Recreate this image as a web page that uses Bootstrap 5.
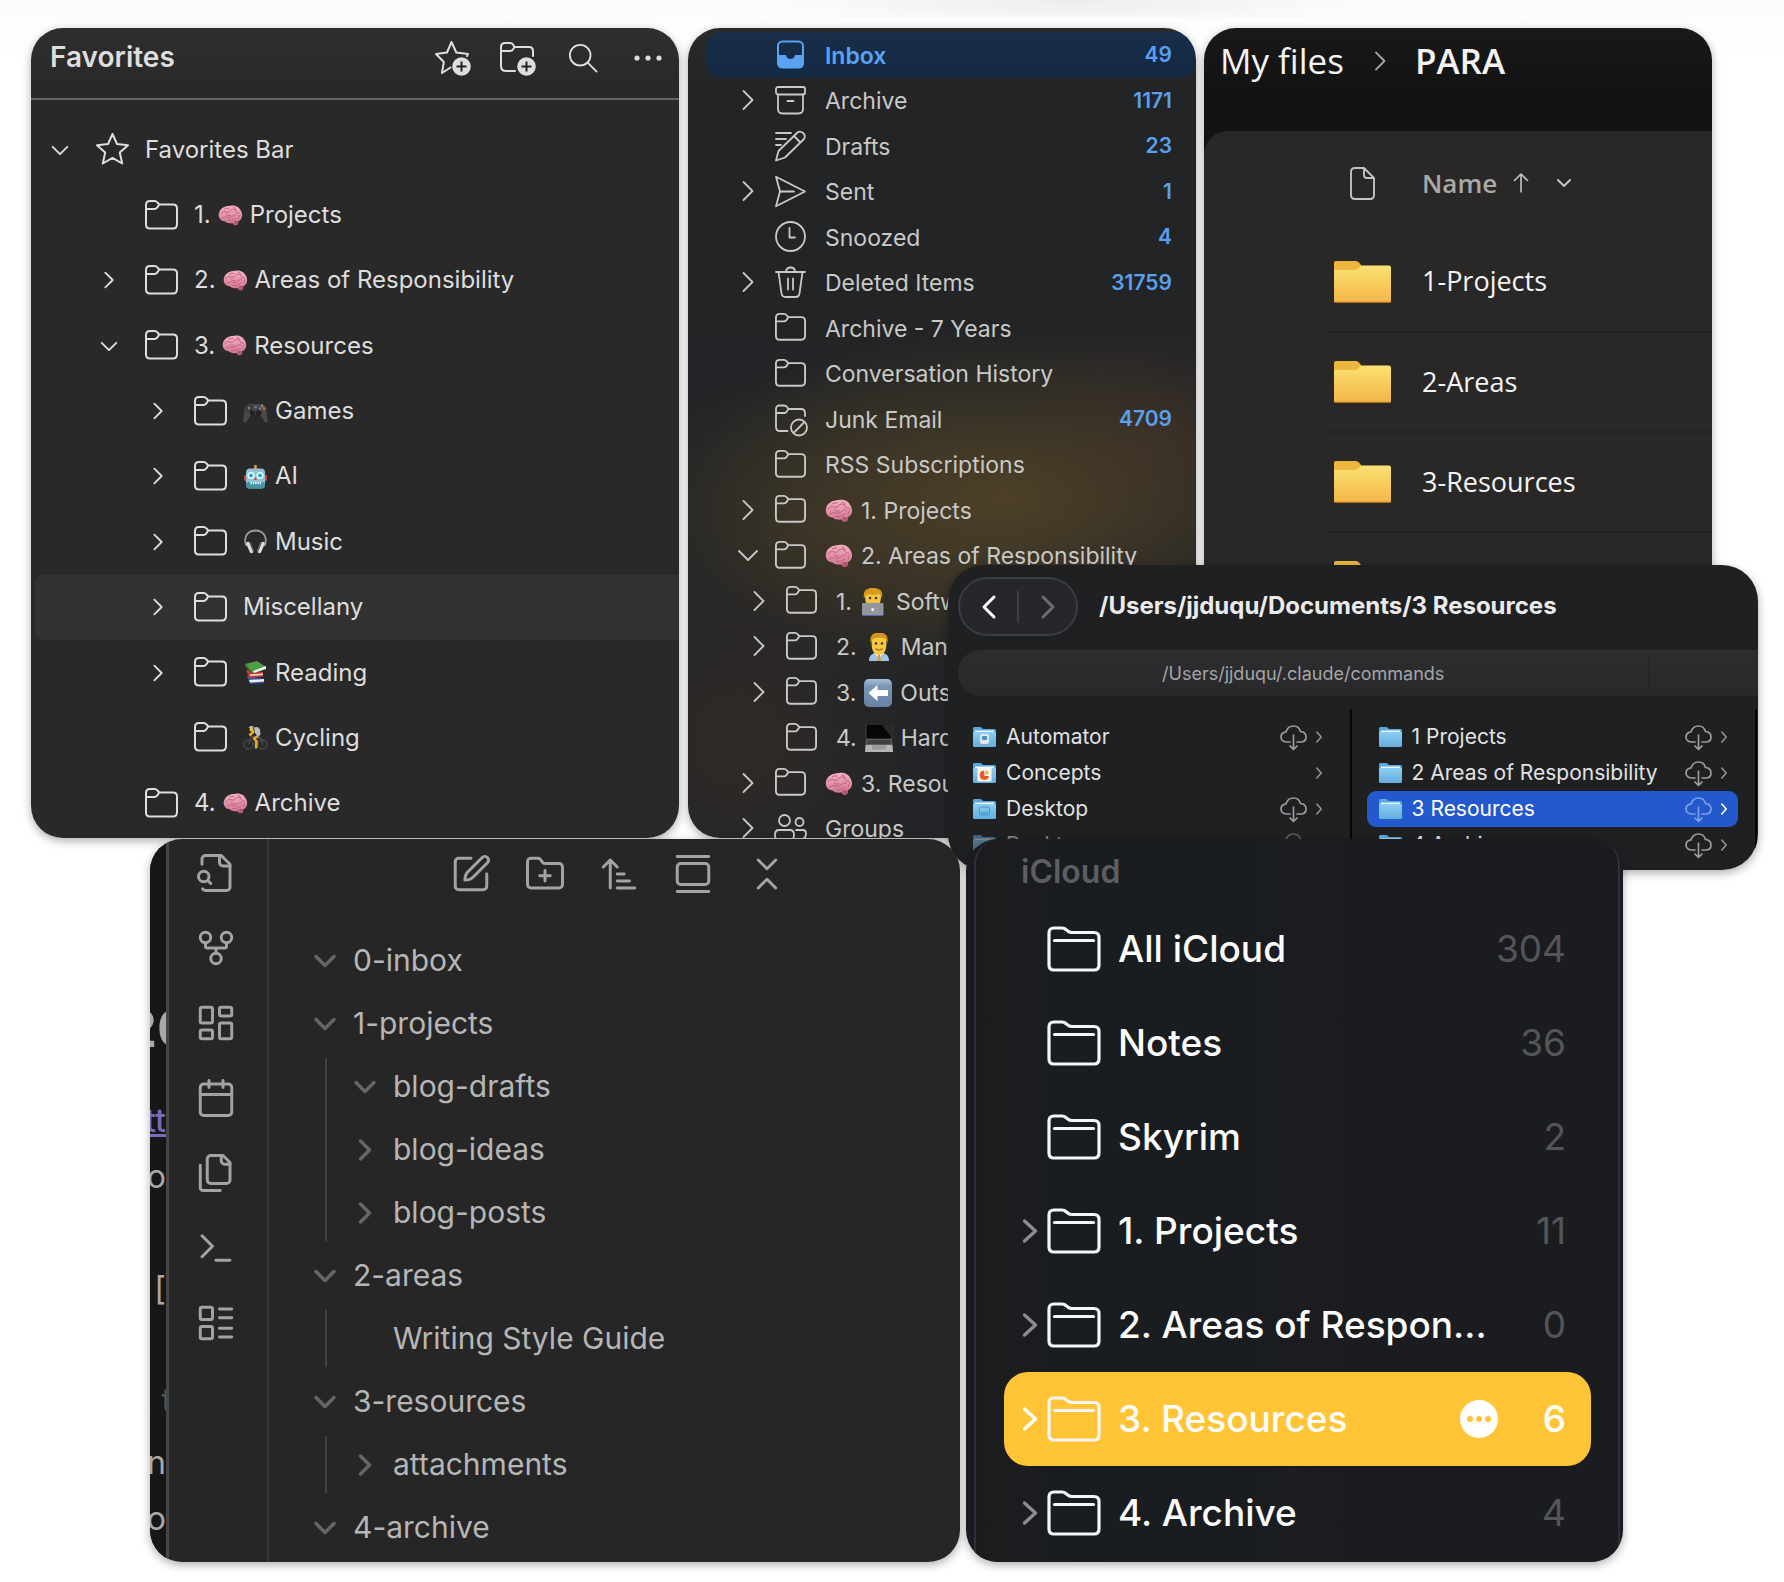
<!DOCTYPE html>
<html lang="en">
<head>
<meta charset="utf-8">
<meta name="viewport" content="width=device-width, initial-scale=1">
<title>PARA everywhere</title>
<link href="https://cdn.jsdelivr.net/npm/bootstrap@5.3.0/dist/css/bootstrap.min.css" rel="stylesheet">
<style>
body{font-family:Inter,"Liberation Sans",sans-serif;background:#fff;overflow-x:hidden}
a,a:hover{color:inherit;text-decoration:none}
ul{list-style:none;margin:0;padding:0}
svg{display:block;flex:none;overflow:visible}
.ln{fill:none;stroke:currentColor;stroke-linecap:round;stroke-linejoin:round}
.bare{background:none;border:0;padding:0;color:inherit;display:flex;align-items:center;justify-content:center;flex:none}
.desk{padding:28px 0 20px;background:
  radial-gradient(280px 30px at 60% 0,#ededed,#ededed00) 0 0/100% 17px no-repeat,
  linear-gradient(#fafafa,#fcfcfc) 0 0/100% 17px no-repeat,
  linear-gradient(#fdfdfd,#fff) 0 17px/100% 40px no-repeat #fff}
.win{border-radius:32px;overflow:hidden;box-shadow:0 3px 10px rgba(0,0,0,.32);min-width:0}
.top-row{padding:0 72px 0 31px;height:810px}
.low-row{padding:0 161px 0 150px;margin-top:1px;height:723px;z-index:2}

/* favourites */
.fav{flex:648 1 0;margin-right:9px;background:linear-gradient(#2e2e2e,#292929 60px);color:#dedede;font-size:24px}
.fav-head{height:72px;border-bottom:2px solid #666;padding:0 13px 10px 19px;gap:29px}
.fav-head h2{font-size:28px;font-weight:600;margin:0 auto 0 0}
.fav-head .bare{width:36px;height:36px}
.fav-list{padding:17px 0 2px}
.fav-row{flex:1 1 0;display:flex;align-items:center;margin-left:4px;padding-left:13px;border-radius:8px 0 0 8px}
.fav-row.lv1{padding-left:62px}
.fav-row.lv2{padding-left:111px}
.fav-row.hov{background:#323232}
.fav-row .tw{width:24px;height:24px;margin-right:24px;flex:none}
.fav-row .ic{width:33px;height:33px;margin-right:16px}
.fav-row a{display:flex;align-items:center;gap:7px}
.fav .em{width:25px;height:25px}

/* mail: the side padding (19px) is added to the flex share */
.mail{flex:489 1 0;margin-right:8px;padding:4px 1px 0 18px;color:#c9c9c8;font-size:23px;background:
  radial-gradient(330px 170px at 62% 58%,#4d4026,#4d402600),
  radial-gradient(140px 130px at 92% 50%,#3c2b2988,#3c2b2900),
  radial-gradient(190px 200px at 10% 88%,#2f2a27,#2f2a2700),
  radial-gradient(260px 160px at 28% 62%,#40372688,#40372600),
  linear-gradient(#2a2b2b,#222426 60px,#222427)}
.mail ul{height:819px;display:flex;flex-direction:column}
.mail li{flex:1 1 0;display:flex;align-items:center;padding:0 23px 0 30px;border-radius:16px}
.mail li.sub{padding-left:41px}
.mail li.cur{background:linear-gradient(#182e49,#132943);color:#5aa2f2;font-weight:600}
.mail .tw{width:24px;height:24px;margin-right:15px;flex:none}
.mail .ic{width:31px;height:31px;margin-right:19px}
.mail a{display:flex;align-items:center;gap:8px;white-space:nowrap;margin-right:auto;padding-top:2px}
.mail .em{width:28px;height:28px}
.mail .cnt{color:#5a9ff0;font-weight:600;font-size:21px}

/* drive */
.drive{flex:508 1 0;background:linear-gradient(#191919,#131313 60px);color:#f4f4f4;font-family:"Open Sans","Noto Sans",sans-serif}
.crumb{height:103px;padding:0 0 38px 16px;font-size:35px;line-height:46px}
.crumb .sep{width:20px;height:20px;margin:0 25px 0 26px}
.drive-body{background:#292827;border-top-left-radius:24px;height:707px;padding-left:122px}
.drive table{width:100%;border-collapse:collapse;font-size:27px}
.drive th{height:101px;padding-top:4px;color:#aaa9a7;font-weight:600;font-size:26px}
.drive td{height:100px;border-bottom:2px solid #242322}
.drive .c1{width:73px}
.drive .c1 svg{margin:0 auto}
.drive .c2{padding-left:23px}
.drive .caret{margin-left:28px}

/* finder */
.finder{position:absolute;top:565px;right:26px;width:45.4%;height:305px;background:#1e2022;color:#e2e2e3;z-index:1;border-radius:36px}
.fd-bar{padding:12px 0 0 10px;height:85px}
.pill{width:120px;height:59px;border-radius:30px;border:2px solid #3a3d42;background:#25272b}
.pill .bare{width:57px;height:55px}
.pill i{width:2px;height:32px;background:#3b3d41}
.fd-bar h2{height:59px;font-size:24px;font-weight:700;margin:0 0 0 21px;color:#ebebeb;white-space:nowrap}
.fd-tab{margin-left:10px;height:46px;border-radius:23px 0 0 23px;background:linear-gradient(#2c2d2f,#29292c);color:#a4a5a7;font-size:18px}
.fd-tab a{flex:692 1 0;text-align:center}
.fd-tab span{flex:108 1 0;border-left:2px solid #242527;height:30px}
.fd-cols{margin-top:13px;height:161px}
.fd-col{flex:1 1 0;padding:10px 17px 0 15px;border-right:2px solid #060607;min-width:0}
.fd-col:first-child{padding-left:13px}
.fd-col:last-child{margin-right:1px}
.fd-col li{height:36px;border-radius:9px;display:flex;align-items:center;padding:0 11px 0 12px;font-size:21px;white-space:nowrap}
.fd-col li.cur{background:#2458cd;color:#fff}
.fd-col .fo{width:23px;height:22px;margin-right:10px}
.fd-col a{margin-right:auto}
.fd-col .cl{width:27px;height:27px;color:#9b9c9e}
.fd-col .ar{width:6px;height:12px;margin-left:9px;color:#929395}
.fd-col .cur .cl{color:#7f9fe6}
.fd-col .cur .ar{color:#fff}
.fd-col .dim{opacity:.5}

/* vault */
.vault{flex:810 1 0;margin-right:6px;background:#262626;color:#b6b6b6}
.sliver{width:16px;background:#171717;overflow:hidden;color:#a9a9a9;font-size:32px;line-height:38px;padding-top:162px}
.sliver div{display:flex;justify-content:flex-end;white-space:nowrap}
.sliver .big{font-size:52px;font-weight:700;line-height:56px;height:101px;margin-right:-26px}
.sliver .lk{color:#7c6bbd;text-decoration:underline;font-weight:500;height:56px}
.sliver .s1{height:112px}.sliver .s2{height:112px}.sliver .s3{height:62px;color:#555;margin-right:-6px}.sliver .s4{height:56px}
.ribbon{width:103px;border-left:3px solid #454545;border-right:2px solid #383838;padding:13px 4px 0 0;gap:33px}
.vault .bare{color:#a3a3a3}
.vault-tools{padding:14px 0 34px 9px;gap:32px}
.tree{font-size:30px}
.tree .nd{height:63px;display:flex;align-items:center;padding-left:44px}
.tree ul .nd{padding-left:84px}
.tree .tw{width:24px;height:24px;margin-right:16px;flex:none;color:#666}
.tree ul{position:relative}
.tree ul::before{content:"";position:absolute;left:56px;top:3px;bottom:3px;width:2px;background:#414141}

/* notes */
.notes{flex:657 1 0;background:#191b1e;color:#fcfcfc}
.notes-in{margin:0 3px 0 8px;border:solid #2d3039;border-width:0 2px;border-radius:26px 26px 0 0;height:100%;background:linear-gradient(90deg,#1b1c1e,#191d20 25%,#1b1c20 60%,#1b1c1f)}
.notes h3{height:63px;margin:0;padding:3px 0 0 45px;display:flex;align-items:center;font-size:32px;font-weight:600;color:#5d5e61}
.notes li{height:94px;margin:0 27px 0 28px;padding:0 25px 0 18px;border-radius:24px;display:flex;align-items:center;font-size:37px;font-weight:500;white-space:nowrap}
.notes .tw{width:16px;height:26px;margin-right:9px;flex:none;color:#8c8d90}
.notes .ic{width:54px;height:46px;margin-right:17px;color:#f4f6f8}
.notes a{margin-right:auto}
.notes .cnt{color:#545558;font-weight:400}
.notes .cur{background:#ffc537}
.notes .cur .tw,.notes .cur .cnt{color:#fff}
.notes .cur .cnt{font-weight:500}
.notes .more{width:38px;height:38px;margin-right:45px}
</style>
<script src="https://cdn.jsdelivr.net/npm/bootstrap@5.3.0/dist/js/bootstrap.bundle.min.js"></script>
</head>
<body>
<svg width="0" height="0" class="position-absolute" aria-hidden="true">
<defs>
<linearGradient id="gBrain" x1="0" y1="0" x2="0" y2="1"><stop offset="0" stop-color="#f7b3c3"/><stop offset="1" stop-color="#cf6f8c"/></linearGradient>
<linearGradient id="gYel" x1="0" y1="0" x2="0" y2="1"><stop offset="0" stop-color="#fbe172"/><stop offset="1" stop-color="#f2b646"/></linearGradient>
<linearGradient id="gBlue" x1="0" y1="0" x2="0" y2="1"><stop offset="0" stop-color="#8ccdf3"/><stop offset="1" stop-color="#62aede"/></linearGradient>
<linearGradient id="gKey" x1="0" y1="0" x2="0" y2="1"><stop offset="0" stop-color="#a9bfd8"/><stop offset=".25" stop-color="#7a96b6"/><stop offset="1" stop-color="#6683a5"/></linearGradient>
</defs>
<symbol id="c-d" viewBox="0 0 24 24"><path class="ln" stroke-width="2" d="M4 8.500l8 8 8-8"/></symbol>
<symbol id="c-r" viewBox="0 0 24 24"><path class="ln" stroke-width="2" d="M8 4l8 8-8 8"/></symbol>
<symbol id="m-d" viewBox="0 0 24 24"><path class="ln" stroke-width="1.800" d="M3 8l9 9 9-9"/></symbol>
<symbol id="m-r" viewBox="0 0 24 24"><path class="ln" stroke-width="1.800" d="M7.500 3l9 9-9 9"/></symbol>
<symbol id="o-d" viewBox="0 0 24 24"><path class="ln" stroke-width="3.500" d="M3 7.500l9 9 9-9"/></symbol>
<symbol id="o-r" viewBox="0 0 24 24"><path class="ln" stroke-width="3.500" d="M7.500 3l9 9-9 9"/></symbol>
<symbol id="n-r" viewBox="0 0 16 26"><path class="ln" stroke-width="3.400" d="M2.500 3l11 10-11 10"/></symbol>
<symbol id="fold" viewBox="0 0 33 33"><path class="ln" stroke-width="2" d="M1 6q0-4 4-4h4.500q1.800 0 3 1.500l1.700 2H28q4 0 4 4V25q0 4.500-4 4.500H5q-4 0-4-4zM1 10h8.500q1.600 0 2.600-1.300l2.200-3.200"/></symbol>
<symbol id="star" viewBox="0 0 33 33"><path class="ln" stroke-width="2" d="M16.500 1l4.500 10 11 1.200-8.200 7.300 2.400 11-9.700-5.600-9.700 5.600 2.400-11L1 12.200 12 11z"/></symbol>
<symbol id="brain" viewBox="0 0 28 28"><path fill="url(#gBrain)" d="M14 3c6-1 10 2 11.500 5.500C28.500 13 27 19 22.500 20.500c.8 2-.3 4.500-2.700 4.500-1.600 0-2.600-1.200-3.200-2.400C13 23 9.500 22.500 7.500 20.500 2.500 20 0 16 1 11.500 2 6.500 7 3 14 3z"/><path fill="#b25574" d="M17 20.500q3-1 5.500 0 .5 4-2.700 4.500-2-.5-2.800-4.500z"/><g class="ln" color="#bd5f7f" stroke-width="1"><path d="M3 12q3-4 6-2t5-2q2-2 5-.500M7 7q2-2 5-1M4.500 17q3-2.500 6-1t6-1.500 5-1M17 4.500q3 1 3 4t4 3M9 13q2 2 5 1M11 19.500q5 1 9-2.500M25 13q-2 1-2 4"/></g></symbol>
<symbol id="pad" viewBox="0 0 25 25"><path fill="#484848" d="M5 5h15l3 3 2 14q-2 3-4 0l-4-6H8l-4 6q-2 3-4 0L2 8z"/><g fill="#222"><circle cx="6" cy="9" r="2.800"/><circle cx="9.500" cy="14" r="2.800"/><circle cx="15.500" cy="14" r="2.800"/></g><path stroke="#999" d="M4 9h4M6 7v4M11 8h3"/><circle cx="19" cy="7" r="1.300" fill="#6a6"/><circle cx="21" cy="9.500" r="1.500" fill="#e2552c"/><circle cx="17" cy="9.500" r="1.200" fill="#58c"/></symbol>
<symbol id="bot" viewBox="0 0 25 25"><path stroke="#d6a23a" stroke-width="2.500" d="M12.500 1v5"/><rect x="1" y="11" width="23" height="6" rx="1" fill="#d0443c"/><rect x="3" y="4.500" width="19" height="20" rx="4" fill="#8cc4d2"/><rect x="3" y="18" width="19" height="6.500" rx="3" fill="#4993a8"/><circle cx="8" cy="11.500" r="3.600" fill="#e8fbff"/><circle cx="17" cy="11.500" r="3.600" fill="#e8fbff"/><circle cx="8" cy="11.500" r="1.900" fill="#28aac4"/><circle cx="17" cy="11.500" r="1.900" fill="#28aac4"/><path fill="#d04a37" d="M12.500 13l1.600 3h-3.200z"/><path stroke="#e9f4f6" stroke-width="2.500" stroke-dasharray="1.500 .8" d="M7.500 19h10.500"/></symbol>
<symbol id="phones" viewBox="0 0 25 25"><path fill="none" stroke="#9b9b9b" stroke-width="1.800" d="M3.500 17C-1 6 7 1.500 12.500 1.500S26 6 21.500 17"/><path stroke="#dcdcdc" stroke-width="3.500" stroke-linecap="round" d="M5 14.500l3.500 8M20 14.500l-3.500 8"/><path stroke="#666" stroke-width="1.500" d="M7 13.500l3.500 9M18 13.500l-3.500 9"/></symbol>
<symbol id="books" viewBox="0 0 25 25"><path fill="#4056a8" d="M4 16l3 8 14-1v-4z"/><path fill="#eee" d="M6 20l15-1v2.500l-14 1z"/><path fill="#c8382f" d="M3 10l3 8 14-1.500V12z"/><path fill="#f4e5e5" d="M7 14.500l13-1V15l-13 1z"/><path fill="#4e9e42" d="M2 4l12-3 9 6-13 6z"/><path fill="#e9f4e6" d="M10 11l13-5v3l-12 4z"/><path fill="#357a2f" d="M2 4l8 8.500-.500 1.500L2 6z"/></symbol>
<symbol id="bike" viewBox="0 0 25 25"><g fill="none" stroke="#55585b" stroke-width="1"><circle cx="5.500" cy="19.500" r="4.600"/><circle cx="19.500" cy="19.500" r="4.600"/><path d="M5.500 19.500l3-8 10 2 1 6M10 19.500l7-7"/></g><path fill="#bdbdbd" d="M11 2.500q4-1.500 6 2l.5 5-2.500 2.500-3-4z"/><path fill="none" stroke="#e6ae2d" stroke-width="2.600" stroke-linejoin="round" d="M11 6l-4.500 4.500M15 11l-4 2.500 2.500 3-.5 7"/><circle cx="8.500" cy="4.500" r="2" fill="#f0bd3c"/><path fill="#d9d9d9" d="M5.500 3Q8-.500 11 2.500z"/></symbol>
<symbol id="tech" viewBox="0 0 28 28"><path fill="#2c36c4" d="M2 28q0-9 6-10h9q6 1 6 10z"/><path fill="#f4c541" d="M5 9q0-9 8-9t8 9q0 10-8 10T5 9z"/><path fill="#d99a1c" d="M4 10Q2 0 13 0t9 10q-1-4-4-4-5 2-8 0-4 0-6 4z"/><circle cx="10" cy="10" r="1.300" fill="#4f3210"/><circle cx="16" cy="10" r="1.300" fill="#4f3210"/><rect x="2" y="15" width="21.500" height="12.500" rx="1" fill="#92959a"/><circle cx="12.700" cy="21.500" r="1.500" fill="#f5f5f5"/></symbol>
<symbol id="boss" viewBox="0 0 28 28"><path fill="#9fc4e8" d="M4 28q0-7 6-8h8q6 1 6 8z"/><path fill="#fff" d="M9 20l5 5 5-5z"/><path fill="#d89a34" d="M13 22h2l1 6h-4z"/><path fill="#f6c844" d="M6.500 9q0-9 7.500-9t7.500 9q0 13-7.500 13T6.500 9z"/><path fill="#d2941b" d="M5.500 10Q4-.500 14-.500T22.500 10Q21 5 18 5 14 4 10 5 7 6 5.500 10z"/><circle cx="11" cy="10.500" r="1.300" fill="#4f3210"/><circle cx="17" cy="10.500" r="1.300" fill="#4f3210"/><path class="ln" color="#8b5a1b" stroke-width="1.200" d="M11 16q3 2 6 0"/></symbol>
<symbol id="left" viewBox="0 0 28 28"><rect width="28" height="28" rx="5" fill="url(#gKey)"/><path fill="#fff" d="M4.500 14l9-8v5H24v6H13.500v5z"/></symbol>
<symbol id="lap" viewBox="0 0 28 28"><rect x="1" y="0" width="26" height="15" rx="1" fill="#060606" stroke="#444"/><path fill="#2a2a2a" d="M17 1h9v12z"/><path fill="#5d5f62" d="M1 15h26l.5 6H.5z"/><path stroke="#222" d="M2 17h24M2 19h24"/><path fill="#b5b5b6" d="M.5 21h27l.5 7H0z"/><path fill="#9b9b9d" d="M7 21h14v4.500H7z"/></symbol>
<symbol id="yfold" viewBox="0 0 57 42"><path fill="#ecb73c" d="M0 2q0-2 2-2h20q2 0 3 1.500L27 4v8H0z"/><path fill="url(#gYel)" d="M0 9h21q2 0 3.500-2L27 4.500h28q2 0 2 2V40q0 2-2 2H2q-2 0-2-2z"/><path stroke="#b9701f" stroke-width="1.200" d="M1 41.400h55"/></symbol>
<symbol id="bfold" viewBox="0 0 23 22"><path fill="#58a9dc" d="M0 2.500Q0 1 1.500 1H7q1 0 2 1l1 1h11.500Q23 3 23 4.500V12H0z"/><path fill="#e9f6fd" d="M2 4.500h19V7H2z"/><path fill="url(#gBlue)" d="M0 7q0-1 1-1h21q1 0 1 1v12.500q0 1.500-1.500 1.500h-20Q0 21 0 19.500z"/></symbol>
<symbol id="cloud" viewBox="0 0 27 27"><path class="ln" stroke-width="1.700" d="M10 18H6.500Q1 17.500 1 13t5-5.200Q8 2 13.500 2t7 5.500Q26 8 26 13t-5.500 5H17M13.500 11v14M10 22l3.500 3.500L17 22"/></symbol>
<symbol id="tinyr" viewBox="0 0 6 12"><path class="ln" stroke-width="1.600" d="M.8 1l4.400 5-4.400 5"/></symbol>
<symbol id="nfold" viewBox="0 0 54 46"><path class="ln" stroke-width="3.200" d="M2 7q0-5 5-5h8q2.500 0 4.500 2l2 1.500Q22.500 6.500 25 6.500h22q5 0 5 5V39q0 5-5 5H7q-5 0-5-5z"/><path class="ln" stroke-width="3.200" d="M7.500 14.500h39"/></symbol>
</svg>

<main class="desk position-relative">
<div class="top-row d-flex">

<section class="win fav d-flex flex-column">
 <header class="fav-head d-flex align-items-center">
  <h2>Favorites</h2>
  <button class="bare" aria-label="Add favorite"><svg width="36" height="36" viewBox="0 0 36 36"><path class="ln" stroke-width="2" d="M15.500 27.500L7 33l1.800-11L1 14l11-1.500L16.500 2l4.800 10.500L33 14l-1 2"/><circle cx="26.500" cy="26.500" r="9.300" fill="#dedede"/><path stroke="#222" stroke-width="2" d="M26.500 21.500v10M21.500 26.500h10"/></svg></button>
  <button class="bare" aria-label="Add folder"><svg width="36" height="36" viewBox="0 0 36 36"><path class="ln" stroke-width="2" d="M15 31H6q-5 0-5-5V7q0-4 4-4h5q2 0 3 1.500L14.500 7H29q4 0 4 4v5M1 11h9q2 0 3-1.500L14.500 7"/><circle cx="26.500" cy="26.500" r="9.300" fill="#dedede"/><path stroke="#222" stroke-width="2" d="M26.500 21.500v10M21.500 26.500h10"/></svg></button>
  <button class="bare" aria-label="Search"><svg width="30" height="30" viewBox="0 0 32 32"><g class="ln" stroke-width="2"><circle cx="13" cy="13" r="11"/><path d="M21 21l9.500 9.500"/></g></svg></button>
  <button class="bare" aria-label="More"><svg width="28" height="8" viewBox="0 0 28 8" fill="#dedede"><circle cx="3" cy="4" r="2.600"/><circle cx="14" cy="4" r="2.600"/><circle cx="25" cy="4" r="2.600"/></svg></button>
 </header>
 <ul class="fav-list d-flex flex-column flex-fill">
  <li class="fav-row"><button class="bare tw" aria-label="Collapse"><svg width="22" height="22"><use href="#c-d"/></svg></button><svg class="ic"><use href="#star"/></svg><a href="#">Favorites Bar</a></li>
  <li class="fav-row lv1"><span class="tw"></span><svg class="ic"><use href="#fold"/></svg><a href="#">1. <svg class="em"><use href="#brain"/></svg>Projects</a></li>
  <li class="fav-row lv1"><button class="bare tw" aria-label="Expand"><svg width="22" height="22"><use href="#c-r"/></svg></button><svg class="ic"><use href="#fold"/></svg><a href="#">2. <svg class="em"><use href="#brain"/></svg>Areas of Responsibility</a></li>
  <li class="fav-row lv1"><button class="bare tw" aria-label="Collapse"><svg width="22" height="22"><use href="#c-d"/></svg></button><svg class="ic"><use href="#fold"/></svg><a href="#">3. <svg class="em"><use href="#brain"/></svg>Resources</a></li>
  <li class="fav-row lv2"><button class="bare tw" aria-label="Expand"><svg width="22" height="22"><use href="#c-r"/></svg></button><svg class="ic"><use href="#fold"/></svg><a href="#"><svg class="em"><use href="#pad"/></svg>Games</a></li>
  <li class="fav-row lv2"><button class="bare tw" aria-label="Expand"><svg width="22" height="22"><use href="#c-r"/></svg></button><svg class="ic"><use href="#fold"/></svg><a href="#"><svg class="em"><use href="#bot"/></svg>AI</a></li>
  <li class="fav-row lv2"><button class="bare tw" aria-label="Expand"><svg width="22" height="22"><use href="#c-r"/></svg></button><svg class="ic"><use href="#fold"/></svg><a href="#"><svg class="em"><use href="#phones"/></svg>Music</a></li>
  <li class="fav-row lv2 hov"><button class="bare tw" aria-label="Expand"><svg width="22" height="22"><use href="#c-r"/></svg></button><svg class="ic"><use href="#fold"/></svg><a href="#">Miscellany</a></li>
  <li class="fav-row lv2"><button class="bare tw" aria-label="Expand"><svg width="22" height="22"><use href="#c-r"/></svg></button><svg class="ic"><use href="#fold"/></svg><a href="#"><svg class="em"><use href="#books"/></svg>Reading</a></li>
  <li class="fav-row lv2"><span class="tw"></span><svg class="ic"><use href="#fold"/></svg><a href="#"><svg class="em"><use href="#bike"/></svg>Cycling</a></li>
  <li class="fav-row lv1"><span class="tw"></span><svg class="ic"><use href="#fold"/></svg><a href="#">4. <svg class="em"><use href="#brain"/></svg>Archive</a></li>
 </ul>
</section>

<section class="win mail">
 <ul>
  <li class="cur"><span class="tw"></span><svg class="ic" viewBox="0 0 31 31"><rect x="3" y="2.500" width="25" height="26" rx="4.500" class="ln" stroke-width="2"/><path fill="currentColor" d="M2.500 16H11q1 4 4.500 4t4.500-4h8.500v9q0 4-4 4h-18q-4 0-4-4z"/></svg><a href="#">Inbox</a><span class="cnt">49</span></li>
  <li><button class="bare tw" aria-label="Expand"><svg width="24" height="24"><use href="#m-r"/></svg></button><svg class="ic" viewBox="0 0 31 31"><g class="ln" stroke-width="1.800"><rect x="1" y="2" width="29" height="7.500" rx="2"/><path d="M3 9.500V24q0 4.500 4.500 4.500h16q4.500 0 4.500-4.500V9.500M12.500 16h6"/></g></svg><a href="#">Archive</a><span class="cnt">1171</span></li>
  <li><span class="tw"></span><svg class="ic" viewBox="0 0 31 31"><g class="ln" stroke-width="1.800"><path d="M1 30.500l2.500-9.500L22.500 2.500q2.500-2 5.500.500t1 6L10 27.500zM19 6l6.500 6.500M1 3h15M1 9h10M1 15h5"/></g></svg><a href="#">Drafts</a><span class="cnt">23</span></li>
  <li><button class="bare tw" aria-label="Expand"><svg width="24" height="24"><use href="#m-r"/></svg></button><svg class="ic" viewBox="0 0 31 31"><path class="ln" stroke-width="1.800" d="M1 .800L30 15.500 1 30.200 5 15.500zM5 15.500h14"/></svg><a href="#">Sent</a><span class="cnt">1</span></li>
  <li><span class="tw"></span><svg class="ic" viewBox="0 0 31 31"><g class="ln" stroke-width="1.800"><circle cx="15.500" cy="15.500" r="14.500"/><path d="M14.500 7v9.500H20"/></g></svg><a href="#">Snoozed</a><span class="cnt">4</span></li>
  <li><button class="bare tw" aria-label="Expand"><svg width="24" height="24"><use href="#m-r"/></svg></button><svg class="ic" viewBox="0 0 31 31"><path class="ln" stroke-width="1.800" d="M1 5h29M3.500 5l3 21.500q.5 3.500 4 3.500h10q3.500 0 4-3.500l3-21.500M11 5q0-4.500 4.500-4.500T20 5M13 11.500v11M18 11.500v11"/></svg><a href="#">Deleted Items</a><span class="cnt">31759</span></li>
  <li><span class="tw"></span><svg class="ic"><use href="#fold"/></svg><a href="#">Archive - 7 Years</a></li>
  <li><span class="tw"></span><svg class="ic"><use href="#fold"/></svg><a href="#">Conversation History</a></li>
  <li><span class="tw"></span><svg class="ic" viewBox="0 0 31 31"><g class="ln" stroke-width="1.800"><path d="M12.500 28H5q-4 0-4-4V6q0-3.500 3.500-3.500H9q2 0 3 1.500l1.500 2H26q4 0 4 4v3M1 10h8q1.500 0 2.500-1.200L13.500 6"/><circle cx="24" cy="24.500" r="8"/><path d="M19.500 29l9-9"/></g></svg><a href="#">Junk Email</a><span class="cnt">4709</span></li>
  <li><span class="tw"></span><svg class="ic"><use href="#fold"/></svg><a href="#">RSS Subscriptions</a></li>
  <li><button class="bare tw" aria-label="Expand"><svg width="24" height="24"><use href="#m-r"/></svg></button><svg class="ic"><use href="#fold"/></svg><a href="#"><svg class="em"><use href="#brain"/></svg>1. Projects</a></li>
  <li><button class="bare tw" aria-label="Collapse"><svg width="24" height="24"><use href="#m-d"/></svg></button><svg class="ic"><use href="#fold"/></svg><a href="#"><svg class="em"><use href="#brain"/></svg>2. Areas of Responsibility</a></li>
  <li class="sub"><button class="bare tw" aria-label="Expand"><svg width="24" height="24"><use href="#m-r"/></svg></button><svg class="ic"><use href="#fold"/></svg><a href="#">1. <svg class="em"><use href="#tech"/></svg>Software</a></li>
  <li class="sub"><button class="bare tw" aria-label="Expand"><svg width="24" height="24"><use href="#m-r"/></svg></button><svg class="ic"><use href="#fold"/></svg><a href="#">2. <svg class="em"><use href="#boss"/></svg>Management</a></li>
  <li class="sub"><button class="bare tw" aria-label="Expand"><svg width="24" height="24"><use href="#m-r"/></svg></button><svg class="ic"><use href="#fold"/></svg><a href="#">3. <svg class="em"><use href="#left"/></svg>Outsourcing</a></li>
  <li class="sub"><span class="tw"></span><svg class="ic"><use href="#fold"/></svg><a href="#">4. <svg class="em"><use href="#lap"/></svg>Hardware</a></li>
  <li><button class="bare tw" aria-label="Expand"><svg width="24" height="24"><use href="#m-r"/></svg></button><svg class="ic"><use href="#fold"/></svg><a href="#"><svg class="em"><use href="#brain"/></svg>3. Resources</a></li>
  <li><button class="bare tw" aria-label="Expand"><svg width="24" height="24"><use href="#m-r"/></svg></button><svg class="ic" viewBox="0 0 31 31"><g class="ln" stroke-width="1.800"><circle cx="9.500" cy="7.500" r="5.500"/><circle cx="24.500" cy="9" r="4"/><path d="M0 22q0-5 4-5h11q4 0 4 5 0 7-9.500 7T0 22zM21 17h7q3 0 3 4 0 6-8.500 6"/></g></svg><a href="#">Groups</a></li>
 </ul>
</section>

<section class="win drive">
 <nav class="crumb d-flex align-items-center" aria-label="Path"><a href="#">My files</a><svg class="sep" viewBox="0 0 20 20"><path class="ln" color="#a5a5a5" stroke-width="1.800" d="M6 1.500l8.500 8.500L6 18.500"/></svg><a href="#" class="fw-semibold">PARA</a></nav>
 <div class="drive-body">
  <table>
   <thead><tr>
    <th class="c1" aria-label="Type"><svg width="25" height="33" viewBox="0 0 25 33"><path class="ln" color="#c4c3c1" stroke-width="1.900" d="M1 5q0-4 4-4h9l10 10v17q0 4-4 4H5q-4 0-4-4zM14 1v7q0 3 3 3h7"/></svg></th>
    <th class="c2"><div class="d-flex align-items-center">Name<svg class="ms-3" width="16" height="20" viewBox="0 0 16 20"><path class="ln" color="#c4c3c1" stroke-width="1.600" d="M8 19V1M1.500 7.500L8 1l6.500 6.500"/></svg><svg class="caret" width="14" height="8" viewBox="0 0 14 8"><path class="ln" color="#c4c3c1" stroke-width="2" d="M1 1l6 6 6-6"/></svg></div></th>
   </tr></thead>
   <tbody>
    <tr><td class="c1"><svg width="57" height="42"><use href="#yfold"/></svg></td><td class="c2"><a href="#">1-Projects</a></td></tr>
    <tr><td class="c1"><svg width="57" height="42"><use href="#yfold"/></svg></td><td class="c2"><a href="#">2-Areas</a></td></tr>
    <tr><td class="c1"><svg width="57" height="42"><use href="#yfold"/></svg></td><td class="c2"><a href="#">3-Resources</a></td></tr>
    <tr><td class="c1"><svg width="57" height="42"><use href="#yfold"/></svg></td><td class="c2"></td></tr>
   </tbody>
  </table>
 </div>
</section>
</div>

<section class="win finder">
 <header class="fd-bar d-flex">
  <div class="pill d-flex align-items-center"><button class="bare" aria-label="Back"><svg width="14" height="24" viewBox="0 0 14 24"><path class="ln" color="#fff" stroke-width="3" d="M12 2L2 12l10 10"/></svg></button><i></i><button class="bare" aria-label="Forward"><svg width="14" height="24" viewBox="0 0 14 24"><path class="ln" color="#6b6d70" stroke-width="3" d="M2 2l10 10L2 22"/></svg></button></div>
  <h2 class="d-flex align-items-center">/Users/jjduqu/Documents/3 Resources</h2>
 </header>
 <div class="fd-tab d-flex align-items-center"><a href="#">/Users/jjduqu/.claude/commands</a><span></span></div>
 <div class="fd-cols d-flex">
  <ul class="fd-col">
   <li><svg class="fo" viewBox="0 0 23 22"><use href="#bfold"/><rect x="7" y="8" width="9" height="10" rx="2" fill="#dfe6ee"/><rect x="9" y="10" width="5" height="4" rx="1" fill="#4a90c8"/><path stroke="#9aa8b8" d="M7.500 19h8"/></svg><a href="#">Automator</a><svg class="cl"><use href="#cloud"/></svg><svg class="ar"><use href="#tinyr"/></svg></li>
   <li><svg class="fo" viewBox="0 0 23 22"><use href="#bfold"/><rect x="4.500" y="5.500" width="14" height="14" fill="#fbf5f0"/><path fill="#e8582c" d="M11 8.500a4.700 4.700 0 1 0 5 5.500h-4.500z"/><path fill="#f5a623" d="M12.500 8v4.500l3.500-1q-1-3-3.500-3.500z"/></svg><a href="#">Concepts</a><svg class="ar"><use href="#tinyr"/></svg></li>
   <li><svg class="fo" viewBox="0 0 23 22"><use href="#bfold"/><rect x="6.500" y="9" width="10" height="8" rx="1.500" fill="none" stroke="#4c97c8"/><path stroke="#4c97c8" stroke-width="1.500" d="M8 15h7"/></svg><a href="#">Desktop</a><svg class="cl"><use href="#cloud"/></svg><svg class="ar"><use href="#tinyr"/></svg></li>
   <li class="dim"><svg class="fo"><use href="#bfold"/></svg><a href="#">Desktop</a><svg class="cl"><use href="#cloud"/></svg><svg class="ar"><use href="#tinyr"/></svg></li>
  </ul>
  <ul class="fd-col">
   <li><svg class="fo"><use href="#bfold"/></svg><a href="#">1 Projects</a><svg class="cl"><use href="#cloud"/></svg><svg class="ar"><use href="#tinyr"/></svg></li>
   <li><svg class="fo"><use href="#bfold"/></svg><a href="#">2 Areas of Responsibility</a><svg class="cl"><use href="#cloud"/></svg><svg class="ar"><use href="#tinyr"/></svg></li>
   <li class="cur"><svg class="fo"><use href="#bfold"/></svg><a href="#">3 Resources</a><svg class="cl"><use href="#cloud"/></svg><svg class="ar"><use href="#tinyr"/></svg></li>
   <li><svg class="fo"><use href="#bfold"/></svg><a href="#">4 Archive</a><svg class="cl"><use href="#cloud"/></svg><svg class="ar"><use href="#tinyr"/></svg></li>
  </ul>
 </div>
</section>

<div class="low-row d-flex position-relative">
<section class="win vault d-flex">
 <div class="sliver flex-shrink-0">
  <div class="big">20</div><div class="lk">htt</div><div class="s1">o</div><div class="s2">[</div><div class="s3">. t</div><div class="s4">n</div><div>o</div>
 </div>
 <nav class="ribbon d-flex flex-column align-items-center flex-shrink-0" aria-label="Ribbon">
  <button class="bare" aria-label="Quick switcher"><svg class="ln" stroke-width="1.700" width="42" height="42" viewBox="0 0 24 24"><path d="M14 2v4a2 2 0 0 0 2 2h4"/><path d="M4.300 21a2 2 0 0 0 1.700 1h12a2 2 0 0 0 2-2V7l-5-5H6a2 2 0 0 0-2 2v3"/><path d="m9 18-1.500-1.500"/><circle cx="5" cy="14" r="3"/></svg></button>
  <button class="bare" aria-label="Graph view"><svg class="ln" stroke-width="1.700" width="42" height="42" viewBox="0 0 24 24"><circle cx="12" cy="18" r="3"/><circle cx="6" cy="6" r="3"/><circle cx="18" cy="6" r="3"/><path d="M18 9v2c0 .6-.4 1-1 1H7c-.6 0-1-.4-1-1V9M12 12v3"/></svg></button>
  <button class="bare" aria-label="Canvas"><svg class="ln" stroke-width="1.700" width="42" height="42" viewBox="0 0 24 24"><rect x="3" y="3" width="7" height="9" rx="1"/><rect x="14" y="3" width="7" height="5" rx="1"/><rect x="14" y="12" width="7" height="9" rx="1"/><rect x="3" y="16" width="7" height="5" rx="1"/></svg></button>
  <button class="bare" aria-label="Daily note"><svg class="ln" stroke-width="1.700" width="42" height="42" viewBox="0 0 24 24"><path d="M8 2v4M16 2v4M3 10h18"/><rect x="3" y="4" width="18" height="18" rx="2"/></svg></button>
  <button class="bare" aria-label="Templates"><svg class="ln" stroke-width="1.700" width="42" height="42" viewBox="0 0 24 24"><path d="M20 7h-3a2 2 0 0 1-2-2V2"/><path d="M9 18a2 2 0 0 1-2-2V4a2 2 0 0 1 2-2h7l4 4v10a2 2 0 0 1-2 2Z"/><path d="M3 7.600v12.800A1.600 1.600 0 0 0 4.600 22h9.800"/></svg></button>
  <button class="bare" aria-label="Command palette"><svg class="ln" stroke-width="1.700" width="42" height="42" viewBox="0 0 24 24"><path d="M4 17l6-6-6-6M12 19h8"/></svg></button>
  <button class="bare" aria-label="Bases"><svg class="ln" stroke-width="1.700" width="42" height="42" viewBox="0 0 24 24"><rect x="3" y="3" width="7" height="7" rx="1"/><rect x="3" y="14" width="7" height="7" rx="1"/><path d="M14 4h7M14 9h7M14 15h7M14 20h7"/></svg></button>
 </nav>
 <div class="flex-fill">
  <div class="vault-tools d-flex justify-content-center">
   <button class="bare" aria-label="New note"><svg class="ln" stroke-width="1.700" width="42" height="42" viewBox="0 0 24 24"><path d="M12 3H5a2 2 0 0 0-2 2v14a2 2 0 0 0 2 2h14a2 2 0 0 0 2-2v-7"/><path d="M18.400 2.600a2.100 2.100 0 1 1 3 3L13 14q-1.500 1.500-4.500 1.500 0-3 1.500-4.500z"/></svg></button>
   <button class="bare" aria-label="New folder"><svg class="ln" stroke-width="1.700" width="42" height="42" viewBox="0 0 24 24"><path d="M12 10v6M9 13h6"/><path d="M20 20a2 2 0 0 0 2-2V8a2 2 0 0 0-2-2h-7.900a2 2 0 0 1-1.700-.9L9.600 3.900A2 2 0 0 0 7.900 3H4a2 2 0 0 0-2 2v13a2 2 0 0 0 2 2Z"/></svg></button>
   <button class="bare" aria-label="Sort"><svg class="ln" stroke-width="1.700" width="42" height="42" viewBox="0 0 24 24"><path d="m3 8 4-4 4 4M7 4v16M11 12h4M11 16h7M11 20h10"/></svg></button>
   <button class="bare" aria-label="Reveal"><svg class="ln" stroke-width="1.700" width="42" height="42" viewBox="0 0 24 24"><path d="M3 2h18M3 22h18"/><rect x="3" y="6" width="18" height="12" rx="2"/></svg></button>
   <button class="bare" aria-label="Collapse all"><svg class="ln" stroke-width="1.700" width="42" height="42" viewBox="0 0 24 24"><path d="m7 20 5-5 5 5M7 4l5 5 5-5"/></svg></button>
  </div>
  <div class="tree">
   <div class="nd"><button class="bare tw" aria-label="Collapse"><svg width="24" height="24"><use href="#o-d"/></svg></button><a href="#">0-inbox</a></div>
   <div class="nd"><button class="bare tw" aria-label="Collapse"><svg width="24" height="24"><use href="#o-d"/></svg></button><a href="#">1-projects</a></div>
   <ul>
    <li class="nd"><button class="bare tw" aria-label="Collapse"><svg width="24" height="24"><use href="#o-d"/></svg></button><a href="#">blog-drafts</a></li>
    <li class="nd"><button class="bare tw" aria-label="Expand"><svg width="24" height="24"><use href="#o-r"/></svg></button><a href="#">blog-ideas</a></li>
    <li class="nd"><button class="bare tw" aria-label="Expand"><svg width="24" height="24"><use href="#o-r"/></svg></button><a href="#">blog-posts</a></li>
   </ul>
   <div class="nd"><button class="bare tw" aria-label="Collapse"><svg width="24" height="24"><use href="#o-d"/></svg></button><a href="#">2-areas</a></div>
   <ul>
    <li class="nd"><span class="tw"></span><a href="#">Writing Style Guide</a></li>
   </ul>
   <div class="nd"><button class="bare tw" aria-label="Collapse"><svg width="24" height="24"><use href="#o-d"/></svg></button><a href="#">3-resources</a></div>
   <ul>
    <li class="nd"><button class="bare tw" aria-label="Expand"><svg width="24" height="24"><use href="#o-r"/></svg></button><a href="#">attachments</a></li>
   </ul>
   <div class="nd"><button class="bare tw" aria-label="Collapse"><svg width="24" height="24"><use href="#o-d"/></svg></button><a href="#">4-archive</a></div>
  </div>
 </div>
</section>

<section class="win notes">
 <div class="notes-in">
  <h3>iCloud</h3>
  <ul>
   <li><span class="tw"></span><svg class="ic"><use href="#nfold"/></svg><a href="#">All iCloud</a><span class="cnt">304</span></li>
   <li><span class="tw"></span><svg class="ic"><use href="#nfold"/></svg><a href="#">Notes</a><span class="cnt">36</span></li>
   <li><span class="tw"></span><svg class="ic"><use href="#nfold"/></svg><a href="#">Skyrim</a><span class="cnt">2</span></li>
   <li><button class="bare tw" aria-label="Expand"><svg width="16" height="26"><use href="#n-r"/></svg></button><svg class="ic"><use href="#nfold"/></svg><a href="#">1. Projects</a><span class="cnt">11</span></li>
   <li><button class="bare tw" aria-label="Expand"><svg width="16" height="26"><use href="#n-r"/></svg></button><svg class="ic"><use href="#nfold"/></svg><a href="#">2. Areas of Respon...</a><span class="cnt">0</span></li>
   <li class="cur"><button class="bare tw" aria-label="Expand"><svg width="16" height="26"><use href="#n-r"/></svg></button><svg class="ic"><use href="#nfold"/></svg><a href="#">3. Resources</a><button class="bare more" aria-label="More"><svg width="38" height="38" viewBox="0 0 38 38"><circle cx="19" cy="19" r="19" fill="#fff"/><g fill="#ffc537"><circle cx="10" cy="19" r="3"/><circle cx="19" cy="19" r="3"/><circle cx="28" cy="19" r="3"/></g></svg></button><span class="cnt">6</span></li>
   <li><button class="bare tw" aria-label="Expand"><svg width="16" height="26"><use href="#n-r"/></svg></button><svg class="ic"><use href="#nfold"/></svg><a href="#">4. Archive</a><span class="cnt">4</span></li>
  </ul>
 </div>
</section>
</div>
</main>
</body>
</html>
